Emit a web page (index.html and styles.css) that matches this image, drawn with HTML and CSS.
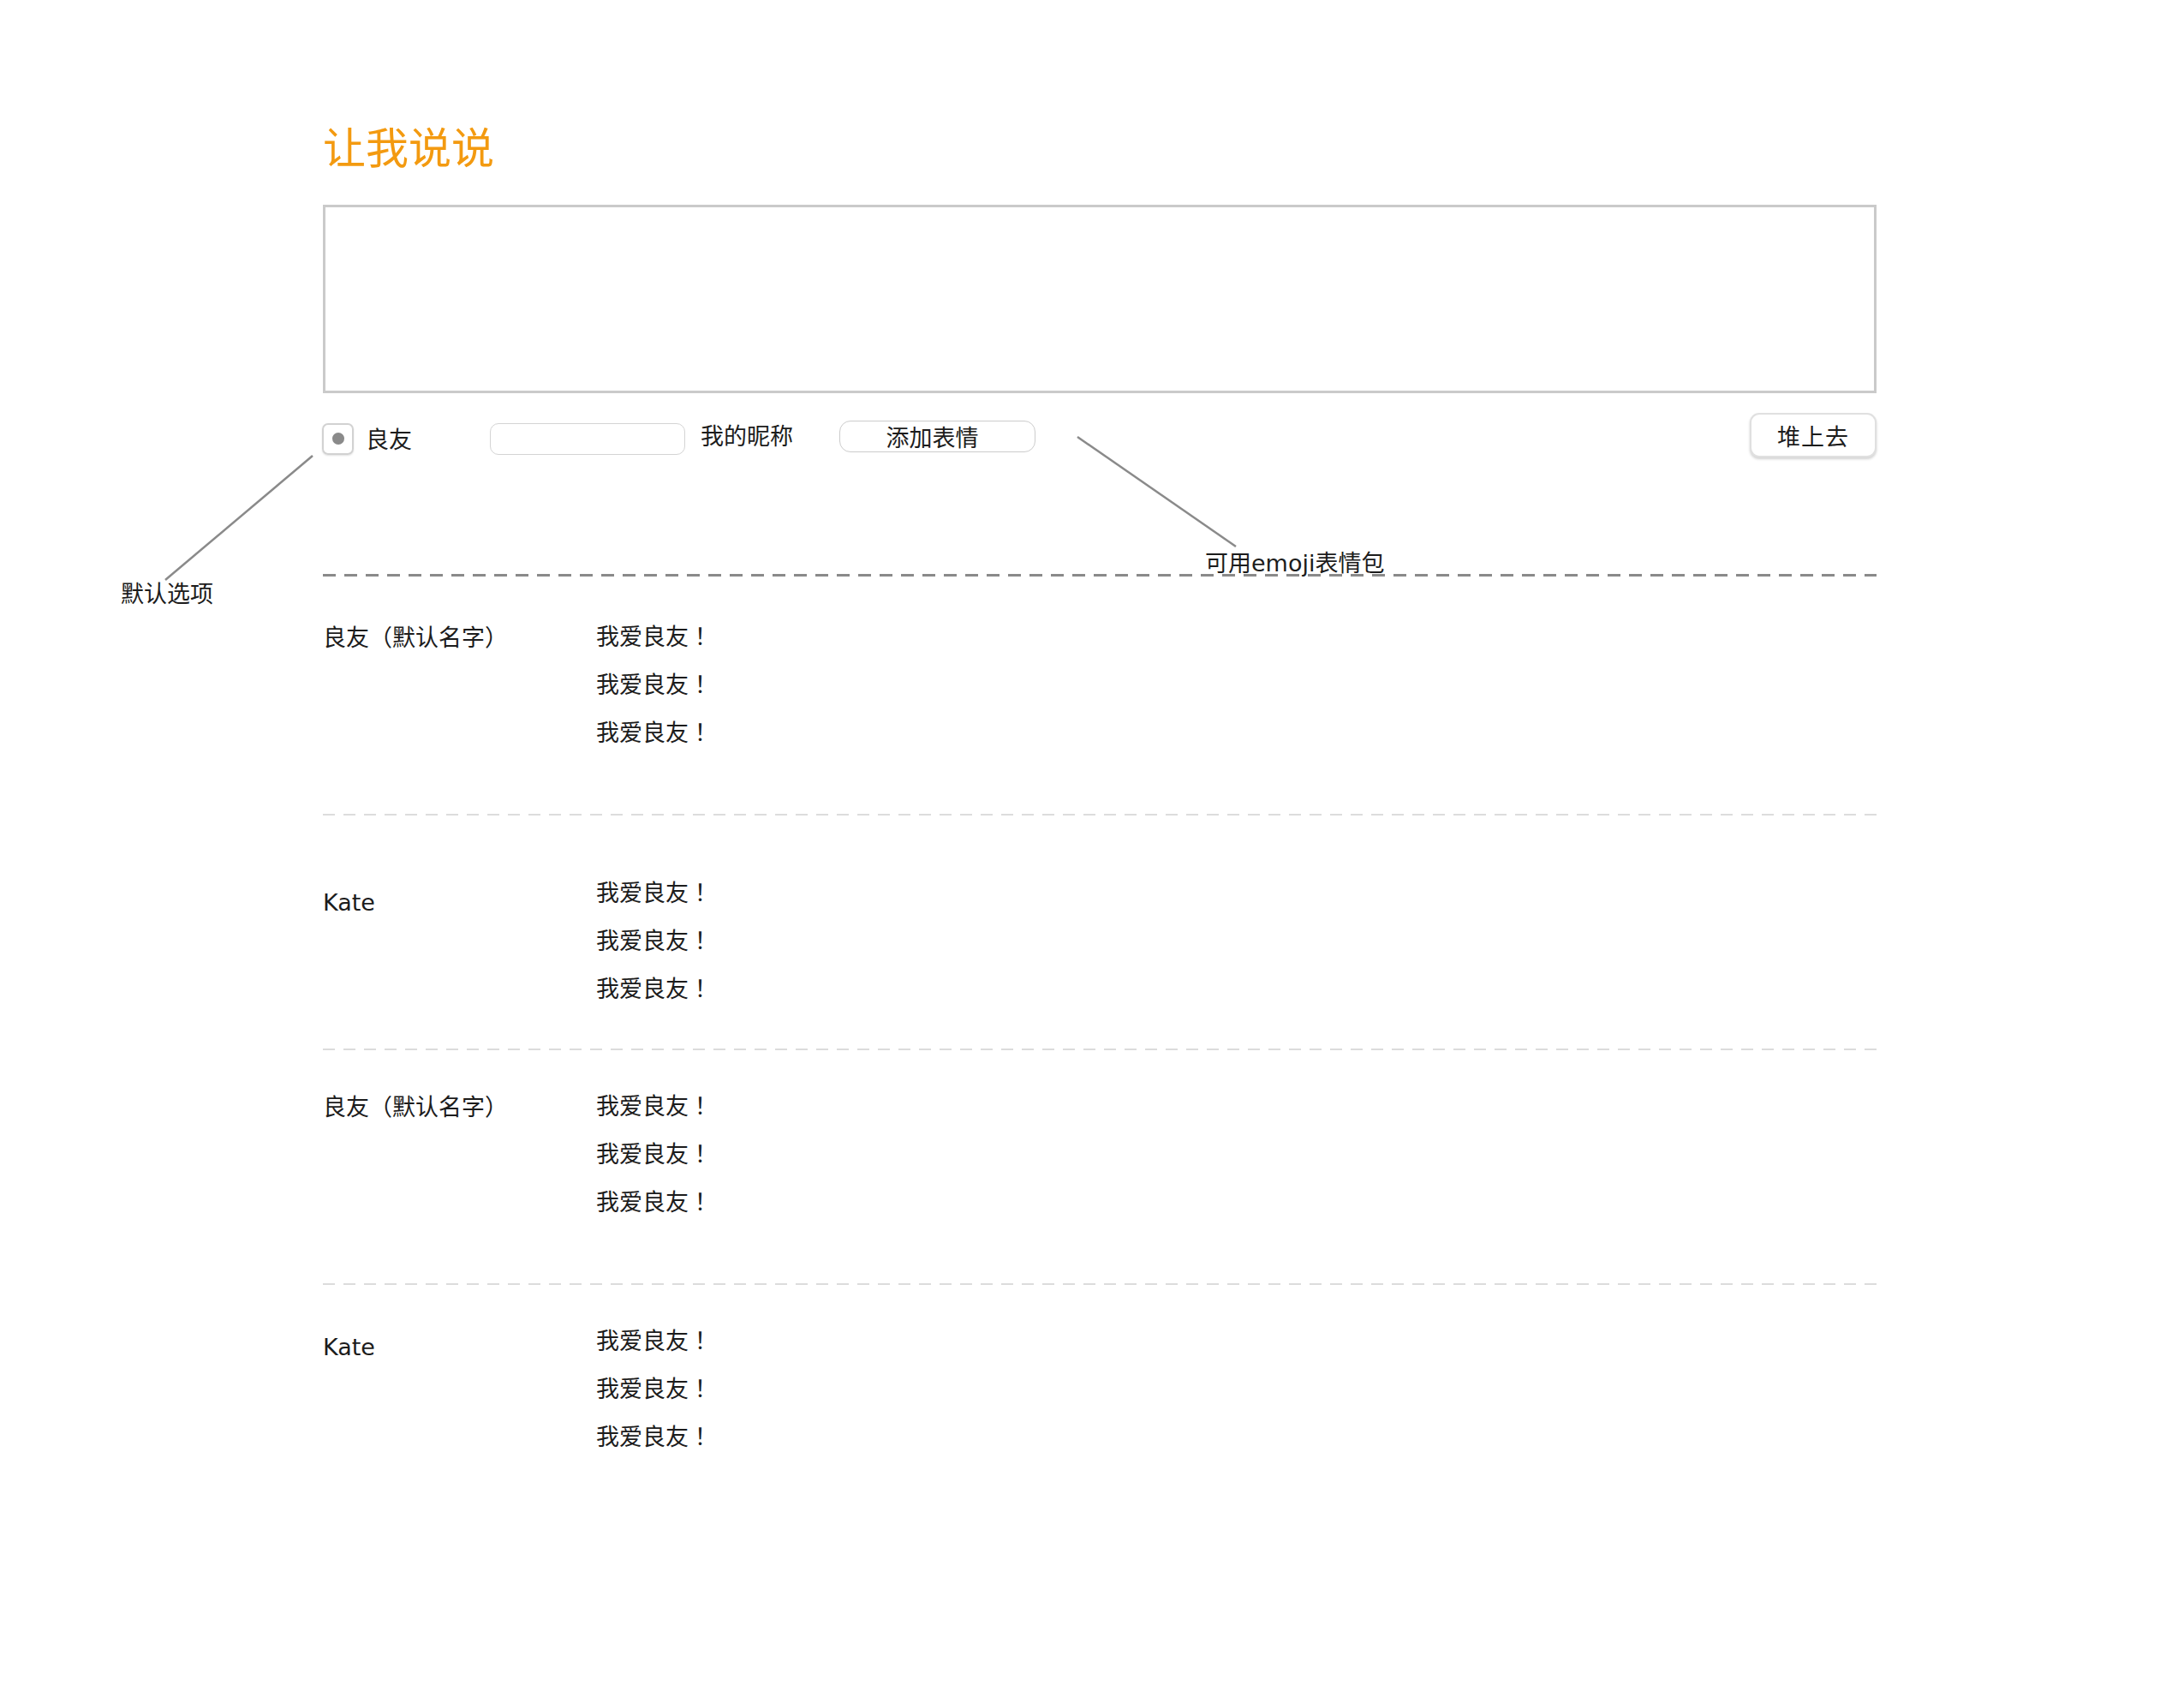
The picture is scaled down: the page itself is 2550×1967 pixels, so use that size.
FILE: index.html
```html
<!DOCTYPE html>
<html lang="zh-CN">
<head>
<meta charset="utf-8">
<title>让我说说</title>
<link rel="stylesheet" href="styles.css">
</head>
<body>
<div class="page">
  <h1 class="title">让我说说</h1>
  <textarea class="editor"></textarea>
  <div class="toolbar">
    <div class="toolbar-left">
      <label class="radio-item">
        <span class="radio"><span class="radio-dot"></span></span>
        <span class="radio-label">良友</span>
      </label>
      <input class="nick-input" type="text">
      <span class="nick-label">我的昵称</span>
      <button class="emoji-btn" type="button">添加表情</button>
    </div>
    <button class="submit-btn" type="button">堆上去</button>
  </div>

  <div class="divider-dark"></div>

  <div class="post post-1">
    <div class="name name-cn">良友（默认名字）</div>
    <div class="messages" lang="zh-TW">
      <div class="msg">我爱良友！</div>
      <div class="msg">我爱良友！</div>
      <div class="msg">我爱良友！</div>
    </div>
  </div>
  <div class="divider-light"></div>
  <div class="post post-2">
    <div class="name name-latin">Kate</div>
    <div class="messages" lang="zh-TW">
      <div class="msg">我爱良友！</div>
      <div class="msg">我爱良友！</div>
      <div class="msg">我爱良友！</div>
    </div>
  </div>
  <div class="divider-light"></div>
  <div class="post post-3">
    <div class="name name-cn">良友（默认名字）</div>
    <div class="messages" lang="zh-TW">
      <div class="msg">我爱良友！</div>
      <div class="msg">我爱良友！</div>
      <div class="msg">我爱良友！</div>
    </div>
  </div>
  <div class="divider-light"></div>
  <div class="post post-4">
    <div class="name name-latin-tight">Kate</div>
    <div class="messages" lang="zh-TW">
      <div class="msg">我爱良友！</div>
      <div class="msg">我爱良友！</div>
      <div class="msg">我爱良友！</div>
    </div>
  </div>

  <svg class="annotations" width="2550" height="1967" viewBox="0 0 2550 1967">
    <line x1="365" y1="532" x2="193" y2="677" />
    <line x1="1258" y1="510" x2="1443" y2="638" />
  </svg>
  <div class="note note-default">默认选项</div>
  <div class="note note-emoji">可用emoji表情包</div>
</div>
</body>
</html>
```
FILE: styles.css
```css
html, body {
  margin: 0;
  padding: 0;
  background: #ffffff;
}

body {
  font-family: "DejaVu Sans", "Noto Sans CJK SC", sans-serif;
  color: #1c1c1c;
  font-size: 27px;
}

.page {
  position: relative;
  min-height: 1967px;
  box-sizing: border-box;
  padding: 139px 0 0 377px;
  width: 2191px;
}

.title {
  margin: 0;
  font-family: "Noto Sans CJK SC", sans-serif;
  font-weight: 400;
  font-size: 50px;
  line-height: 60px;
  color: #f39a10;
}

.editor {
  display: block;
  margin: 40px 0 0 0;
  width: 1814px;
  height: 220px;
  box-sizing: border-box;
  border: 3px solid #cacaca;
  background: #fff;
  resize: none;
  outline: none;
  padding: 0;
}

.toolbar {
  margin-top: 23px;
  height: 52px;
  width: 1814px;
  display: flex;
  align-items: center;
  justify-content: space-between;
}

.toolbar-left {
  display: flex;
  align-items: center;
  padding-top: 8px;
}

.radio-item {
  display: flex;
  align-items: center;
}

.radio {
  width: 37px;
  height: 37px;
  box-sizing: border-box;
  border: 2px solid #d2d2d2;
  border-radius: 7px;
  box-shadow: 0 1px 2px rgba(0, 0, 0, 0.12);
  display: flex;
  align-items: center;
  justify-content: center;
  margin-left: -1px;
}

.radio-dot {
  width: 14px;
  height: 14px;
  border-radius: 50%;
  background: #8a8a8a;
}

.radio-label {
  margin-left: 14px;
  font-family: "Noto Sans CJK SC", sans-serif;
  line-height: 36px;
}

.nick-input {
  margin-left: 91px;
  width: 228px;
  height: 37px;
  box-sizing: border-box;
  border: 1px solid #d4d4d4;
  border-radius: 10px;
  background: #fff;
  outline: none;
  padding: 0;
}

.nick-label {
  margin-left: 18px;
  font-family: "Noto Sans CJK SC", sans-serif;
  line-height: 36px;
  position: relative;
  top: -4px;
}

.emoji-btn {
  margin-left: 54px;
  width: 229px;
  height: 37px;
  box-sizing: border-box;
  border: 1px solid #cccccc;
  border-radius: 13px;
  background: #fff;
  font-family: "Noto Sans CJK SC", sans-serif;
  font-size: 27px;
  line-height: 1;
  color: #1c1c1c;
  padding: 0 12px 0 0;
  position: relative;
  top: -3px;
}

.submit-btn {
  width: 148px;
  height: 52px;
  box-sizing: border-box;
  border: 2px solid #e0e0e0;
  border-radius: 11px;
  background: #fff;
  box-shadow: 0 2px 3px rgba(0, 0, 0, 0.18);
  font-family: "Noto Sans CJK SC", sans-serif;
  font-size: 27px;
  line-height: 1;
  color: #1c1c1c;
  padding: 0;
  letter-spacing: 1px;
}

.divider-dark {
  margin-top: 136px;
  width: 1814px;
  height: 3px;
  background: repeating-linear-gradient(to right, #8a8a8a 0 15px, transparent 15px 25px);
}

.divider-light {
  width: 1814px;
  height: 2px;
  background: repeating-linear-gradient(to right, #dcdcdc 0 14px, transparent 14px 24px);
}

.post {
  display: flex;
}

.post-1 { padding: 41px 0 68px; }
.post-2 { padding: 61px 0 43px; }
.post-3 { padding: 36px 0 68px; }
.post-4 { padding: 36px 0 0; }

.name {
  width: 319px;
  flex: none;
  line-height: 56px;
}

.name-latin {
  padding-top: 13px;
}

.name-latin-tight {
  padding-top: 9px;
}

.name-cn {
  padding-top: 3px;
}

.messages {
  display: flex;
  flex-direction: column;
}

.msg {
  line-height: 56px;
  font-family: "Noto Sans CJK TC", "Noto Sans CJK SC", sans-serif;
}

.annotations {
  position: absolute;
  left: 0;
  top: 0;
  pointer-events: none;
}

.annotations line {
  stroke: #8a8a8a;
  stroke-width: 2.5;
}

.note {
  position: absolute;
  line-height: 36px;
  white-space: nowrap;
}

.note-default {
  left: 141px;
  top: 676px;
}

.note-emoji {
  left: 1407px;
  top: 640px;
}
```
